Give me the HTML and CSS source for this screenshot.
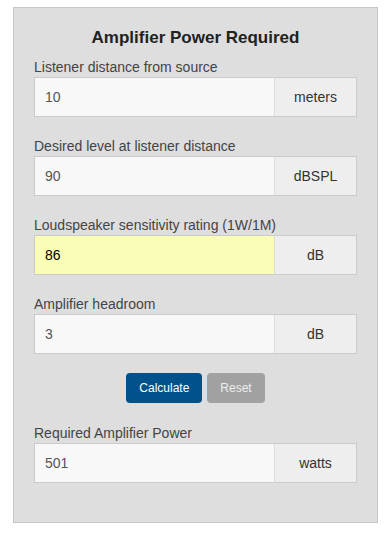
FILE: index.html
```html
<!DOCTYPE html>
<html>
<head>
<meta charset="utf-8">
<link rel="stylesheet" href="styles.css">
</head>
<body>
<div class="panel">
  <h3 class="title">Amplifier Power Required</h3>
  <div class="field">
    <label class="label">Listener distance from source</label>
    <div class="group">
      <input class="input" type="text" value="10">
      <span class="addon">meters</span>
    </div>
  </div>
  <div class="field">
    <label class="label">Desired level at listener distance</label>
    <div class="group">
      <input class="input" type="text" value="90">
      <span class="addon">dBSPL</span>
    </div>
  </div>
  <div class="field">
    <label class="label">Loudspeaker sensitivity rating (1W/1M)</label>
    <div class="group">
      <input class="input input-hl" type="text" value="86">
      <span class="addon">dB</span>
    </div>
  </div>
  <div class="field">
    <label class="label">Amplifier headroom</label>
    <div class="group">
      <input class="input" type="text" value="3">
      <span class="addon">dB</span>
    </div>
  </div>
  <div class="actions">
    <button class="btn btn-primary">Calculate</button>
    <button class="btn btn-reset">Reset</button>
  </div>
  <div class="field field-last">
    <label class="label">Required Amplifier Power</label>
    <div class="group">
      <input class="input" type="text" value="501">
      <span class="addon">watts</span>
    </div>
  </div>
</div>
</body>
</html>
```

FILE: styles.css
```css
* { box-sizing: border-box; }
body {
  margin: 0;
  background: #fff;
  font-family: "Liberation Sans", Arial, sans-serif;
}
.panel {
  margin: 7px 0 0 13px;
  width: 365px;
  border: 1px solid #c6c6c6;
  background: #dedede;
  padding: 20px 20px 39px;
}
.title {
  margin: 0 0 9px;
  font-size: 17px;
  line-height: 20px;
  font-weight: bold;
  color: #222;
  text-align: center;
}
.field { margin-bottom: 19px; }
.field-last { margin-bottom: 0; }
.label {
  display: block;
  font-size: 14px;
  line-height: 20px;
  color: #444;
}
.group {
  display: grid;
  grid-template-columns: 241px 1fr;
  height: 40px;
}
.input {
  height: 40px;
  margin: 0;
  border: 1px solid #cbcbcb;
  border-right-color: #dcdcdc;
  background: #f8f8f8;
  padding: 0 10px;
  font-family: "Liberation Sans", Arial, sans-serif;
  font-size: 14px;
  color: #555;
  outline: none;
  width: 100%;
}
.input-hl {
  background: #f9fdb5;
  color: #000;
}
.addon {
  display: flex;
  align-items: center;
  justify-content: center;
  border: 1px solid #cbcbcb;
  border-left: 0;
  background: #eeeeee;
  font-size: 14px;
  color: #333;
}
.actions {
  display: flex;
  justify-content: center;
  gap: 5px;
  margin-bottom: 20px;
}
.btn {
  height: 30px;
  padding: 0 13px;
  border: 0;
  border-radius: 4px;
  font-family: "Liberation Sans", Arial, sans-serif;
  font-size: 12px;
}
.btn-primary {
  background: #01528a;
  color: #fff;
}
.btn-reset {
  background: #a1a1a1;
  color: #eee;
}
```
